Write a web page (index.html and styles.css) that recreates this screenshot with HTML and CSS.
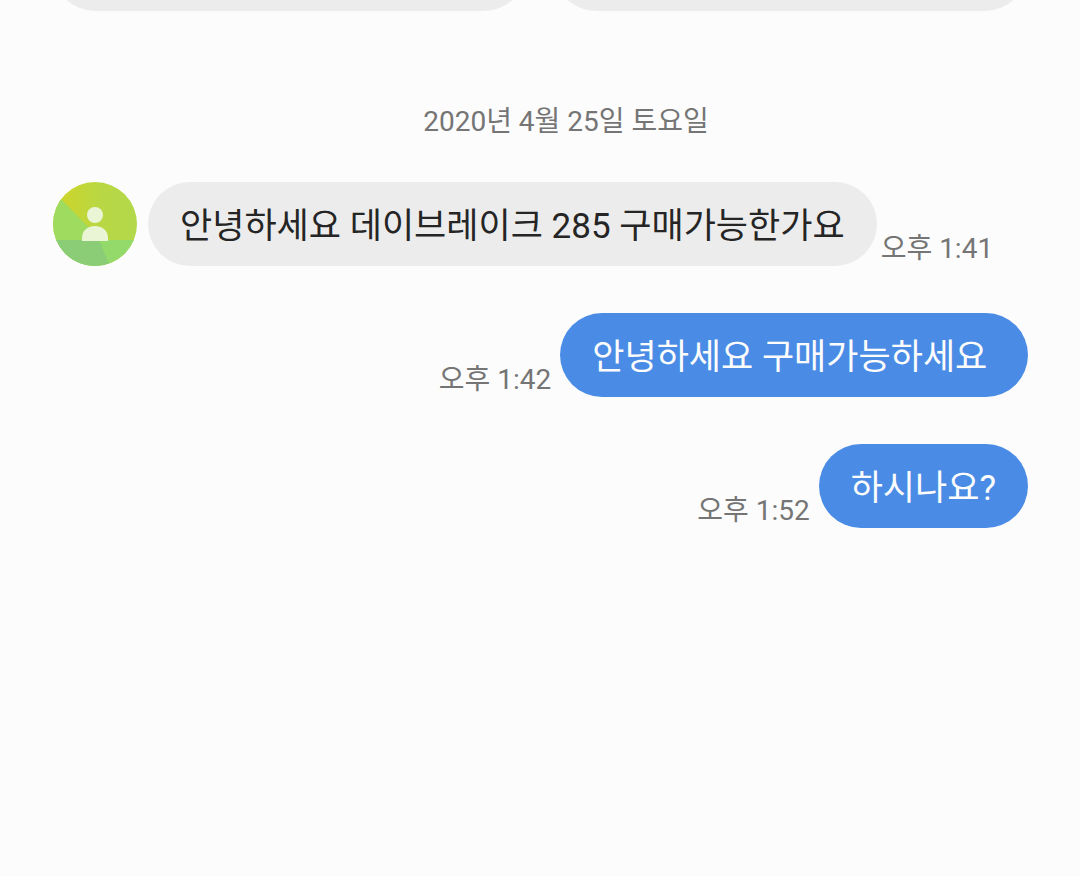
FILE: index.html
```
<!DOCTYPE html>
<html lang="ko">
<head>
<meta charset="UTF-8">
<meta name="viewport" content="width=device-width, initial-scale=1.0">
<title>메시지</title>
<link rel="stylesheet" href="styles.css">
</head>
<body>
<!-- bottom edge of the cards scrolled off the top -->
<div class="cards">
  <div class="card"></div>
  <div class="card"></div>
</div>

<main class="chat">
  <p class="date">2020년 4월 25일 토요일</p>

  <div class="message received">
    <svg class="avatar" viewBox="0 0 84 84" aria-hidden="true">
      <defs>
        <clipPath id="circle"><circle cx="42" cy="42" r="42"/></clipPath>
        <linearGradient id="lime" x1="0" y1="0" x2="1" y2="0">
          <stop offset="0.1" stop-color="#cdd52b"/>
          <stop offset="0.55" stop-color="#b9d743"/>
          <stop offset="1" stop-color="#b2d84b"/>
        </linearGradient>
      </defs>
      <g clip-path="url(#circle)">
        <rect width="84" height="84" fill="url(#lime)"/>
        <path d="M0 10L10 19L46 56L46 84H0Z" fill="#9fdb5f"/>
        <path d="M0 58H84V84H0Z" fill="#93da6b"/>
        <path d="M0 58H46L57 84H0Z" fill="#8bcd77"/>
      </g>
      <circle cx="42" cy="33" r="8" fill="#e9f5d4"/>
      <path d="M29 59V56C29 49 34 44 42 44S55 49 55 56V59Z" fill="#e9f5d4"/>
    </svg>
    <p class="bubble">안녕하세요 데이브레이크 285 구매가능한가요</p>
    <time class="time" datetime="13:41">오후 1:41</time>
  </div>

  <div class="message sent">
    <time class="time" datetime="13:42">오후 1:42</time>
    <p class="bubble">안녕하세요 구매가능하세요&nbsp;</p>
  </div>

  <div class="message sent">
    <time class="time" datetime="13:52">오후 1:52</time>
    <p class="bubble">하시나요?</p>
  </div>
</main>
</body>
</html>
```

FILE: styles.css
```
body {
  margin: 0;
  min-height: 100vh;
  background-color: #fcfcfc;
  font-family: Roboto, "Noto Sans CJK KR", sans-serif;
}

p {
  margin: 0;
}

.cards {
  display: flex;
  gap: 28px;
  height: 11px;
  padding: 0 53px;
  align-items: flex-end;
  overflow: hidden;
}

.card {
  flex: 1;
  height: 84px;
  border-radius: 42px;
  background-color: #ececec;
}

.chat {
  padding: 89px 52px 0;
}

.date {
  margin-right: -52px;
  margin-bottom: 38px;
  font-size: 28px;
  line-height: 44px;
  text-align: center;
  color: #757575;
}

.message {
  display: flex;
  align-items: flex-end;
  margin-bottom: 47px;
}

.sent {
  justify-content: flex-end;
  gap: 9px;
}

.avatar {
  width: 84px;
  height: 84px;
  margin: 0 11px 0 1px;
}

.bubble {
  padding: 19px 32px 13px;
  border-radius: 42px;
  background-color: #ececec;
  color: #252525;
  font-size: 35px;
  line-height: 52px;
}

.sent .bubble {
  background-color: #4a8ce5;
  color: #fcfcfc;
}

.time {
  font-size: 28px;
  line-height: 34px;
  color: #757575;
  white-space: nowrap;
}

.received .time {
  margin-left: 4px;
}
```
